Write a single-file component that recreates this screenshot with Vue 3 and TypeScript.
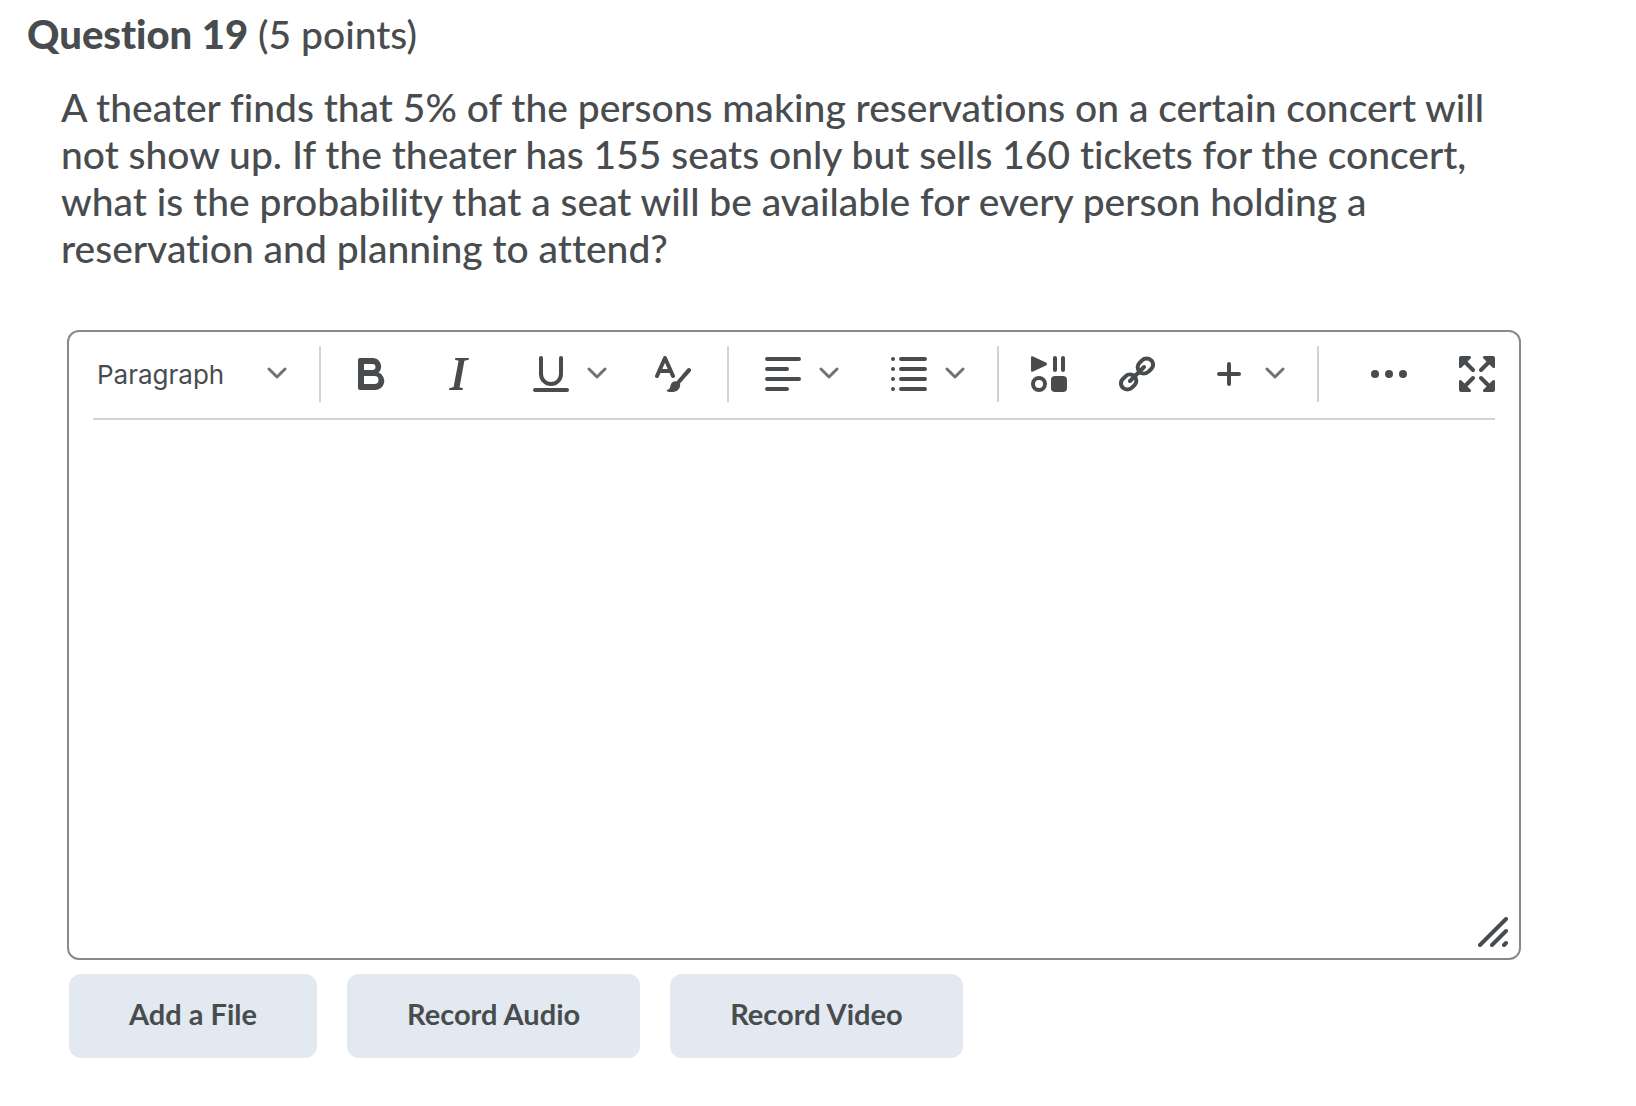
<script setup lang="ts">
import { ref } from 'vue'

const format = ref<string>('Paragraph')
const answer = ref<string>('')
const attachments: string[] = ['Add a File', 'Record Audio', 'Record Video']
</script>

<template>
  <main class="question">
    <h2 class="heading"><strong>Question 19</strong> (5 points)</h2>

    <p class="prompt">
      A theater finds that 5% of the persons making reservations on a certain concert will not show up. If the theater
      has 155 seats only but sells 160 tickets for the concert, what is the probability that a seat will be available
      for every person holding a reservation and planning to attend?
    </p>

    <section class="editor">
      <div class="toolbar" role="toolbar" aria-label="Formatting">
        <div class="format">
          <select v-model="format" aria-label="Format">
            <option>Paragraph</option>
          </select>
          <svg class="chevron" viewBox="0 0 20 14"><path d="M2 2 10 10 18 2" /></svg>
        </div>

        <div class="group">
          <button class="tool" type="button" aria-label="Bold">
            <svg class="icon" viewBox="0 0 36 36">
              <path fill-rule="evenodd" d="M7 2h13a8.500 8.500 0 0 1 5.500 14.600A9 9 0 0 1 22 34H7a2 2 0 0 1-2-2V4a2 2 0 0 1 2-2Zm4 6v6h8.500a3 3 0 0 0 0-6Zm0 12v8h10.500a4 4 0 0 0 0-8Z" />
            </svg>
          </button>
          <button class="tool" type="button" aria-label="Italic">
            <svg class="icon" viewBox="0 0 36 36">
              <path d="M14.300 2H28l-.3 1.800-4.300 1-4.900 26.400 3.400 1-.3 1.800H8l.3-1.800 4.300-1.200L17.600 4.800l-3.600-1Z" />
            </svg>
          </button>
          <button class="menu" type="button" aria-label="Underline">
            <svg class="icon line" viewBox="0 0 36 36"><path d="M8 2v16a10 10 0 0 0 20 0V2M2 34h32" /></svg>
            <svg class="chevron" viewBox="0 0 20 14"><path d="M2 2 10 10 18 2" /></svg>
          </button>
          <button class="tool" type="button" aria-label="Font style">
            <svg class="icon" viewBox="0 0 36 36">
              <path class="stroke" d="M2 20 10 2 18 20M5 15h10" />
              <path d="M32.300 12.700a2.200 2.200 0 0 1 3.300 2.900L25 27.500c1 5.500-3.500 9-9 8.500-3.500-.2-5-1-4-1.900 2-.8 3-1.700 3.300-3.700.6-4 3.500-5.500 6.200-5Z" />
            </svg>
          </button>
        </div>

        <div class="group">
          <button class="menu" type="button" aria-label="Alignment">
            <svg class="icon line" viewBox="0 0 36 36"><path d="M2 3h32M2 13h20M2 23h32M2 33h20" /></svg>
            <svg class="chevron" viewBox="0 0 20 14"><path d="M2 2 10 10 18 2" /></svg>
          </button>
          <button class="menu" type="button" aria-label="List">
            <svg class="icon line" viewBox="0 0 36 36">
              <path d="M2 3h0M2 13h0M2 23h0M2 33h0M10 3h24M10 13h24M10 23h24M10 33h24" />
            </svg>
            <svg class="chevron" viewBox="0 0 20 14"><path d="M2 2 10 10 18 2" /></svg>
          </button>
        </div>

        <div class="group">
          <button class="tool" type="button" aria-label="Insert stuff">
            <svg class="icon" viewBox="0 0 36 36">
              <path d="M0 1.500C0 .3 1 0 2 .4l13 6.200c1.400.7 1.400 2.100 0 2.800L2 15.600c-1 .4-2 .1-2-1.100Z" />
              <rect x="22" width="4" height="16" rx="2" />
              <rect x="30" width="4" height="16" rx="2" />
              <circle class="stroke" cx="8" cy="28" r="6" />
              <rect x="20" y="20" width="16" height="16" rx="4" />
            </svg>
          </button>
          <button class="tool" type="button" aria-label="Insert link">
            <svg class="icon line" viewBox="0 0 36 36">
              <path d="m20.500 6.800 2.500-2.500a6.500 6.500 0 0 1 9.200 0 6 6 0 0 1 0 8.700l-2.700 2.700a6.500 6.500 0 0 1-9 0 6.300 6.300 0 0 1 0-8.900ZM15.500 29.200l-2.500 2.500a6.500 6.500 0 0 1-9.200 0 6 6 0 0 1 0-8.700l2.700-2.700a6.500 6.500 0 0 1 9 0 6.300 6.300 0 0 1 0 8.900ZM11 25l14-14" />
            </svg>
          </button>
          <button class="menu" type="button" aria-label="Insert">
            <svg class="icon line" viewBox="0 0 36 36"><path d="M18 8v20M8 18h20" /></svg>
            <svg class="chevron" viewBox="0 0 20 14"><path d="M2 2 10 10 18 2" /></svg>
          </button>
        </div>

        <div class="group end">
          <button class="tool" type="button" aria-label="More actions">
            <svg class="icon" viewBox="0 0 36 36">
              <circle cx="4" cy="18" r="4" /><circle cx="18" cy="18" r="4" /><circle cx="32" cy="18" r="4" />
            </svg>
          </button>
          <button class="tool" type="button" aria-label="Full screen">
            <svg class="icon" viewBox="0 0 36 36">
              <path class="stroke" d="m6 6 8 8M30 6l-8 8M6 30l8-8M30 30l-8-8" />
              <path d="M2 0h8.500c1.700 0 2 1.500 1 2.500l-9 9C1.500 12.500 0 12.200 0 10.500V2a2 2 0 0 1 2-2ZM34 0h-8.500c-1.700 0-2 1.500-1 2.500l9 9c1 1 2.500.7 2.500-1V2a2 2 0 0 0-2-2ZM2 36h8.500c1.700 0 2-1.500 1-2.500l-9-9c-1-1-2.500-.7-2.500 1V34a2 2 0 0 0 2 2ZM34 36h-8.500c-1.700 0-2-1.500-1-2.500l9-9c1-1 2.500-.7 2.500 1V34a2 2 0 0 1-2 2Z" />
            </svg>
          </button>
        </div>
      </div>

      <textarea v-model="answer" class="answer" aria-label="Answer"></textarea>
      <svg class="grip" viewBox="0 0 30 30"><path d="M2 28 28 2M14 28 28 14M26 28l2-2" /></svg>
    </section>

    <div class="attachments">
      <button v-for="label in attachments" :key="label" class="attach" type="button">{{ label }}</button>
    </div>
  </main>
</template>

<style>
body {
  margin: 0;
  background: #fff;
}
</style>

<style scoped>
.question {
  box-sizing: border-box;
  padding: 10px 115px 48px 67px;
  color: #494c4e;
  font-family: Lato, sans-serif;
  font-variant-ligatures: none;
}

.heading {
  margin: 0 0 0 -40px;
  font-size: 39px;
  font-weight: 500;
  line-height: 48px;
}

.heading strong {
  font-size: 40px;
  font-weight: 900;
}

.prompt {
  margin: 26px 0 58px -6px;
  font-size: 39px;
  font-weight: 500;
  line-height: 47px;
}

.editor {
  position: relative;
  border: 2px solid #868a8e;
  border-radius: 12px;
}

.toolbar {
  display: flex;
  margin: 0 24px;
  padding: 14px 0 16px;
  border-bottom: 2px solid #cdd5dc;
}

.format {
  display: flex;
  align-items: center;
  position: relative;
  width: 194px;
  margin-right: 32px;
}

.format select {
  width: 100%;
  height: 56px;
  padding: 0 32px 0 4px;
  border: 0;
  appearance: none;
  background: transparent;
  color: inherit;
  font-family: Inter, sans-serif;
  font-size: 26px;
}

.format .chevron {
  position: absolute;
  right: 0;
  pointer-events: none;
}

.group {
  display: flex;
  align-items: center;
  gap: 48px;
  padding: 0 32px;
  border-left: 2px solid #cdd5dc;
}

.end {
  flex: 1;
  justify-content: flex-end;
  padding-right: 0;
}

.tool,
.menu {
  display: flex;
  align-items: center;
  height: 56px;
  padding: 0 4px 0 0;
  border: 0;
  background: transparent;
  color: inherit;
}

.menu {
  gap: 18px;
  padding: 0 0 0 4px;
}

.end .tool:last-child {
  padding: 0;
}

.icon {
  width: 36px;
  height: 36px;
  fill: currentColor;
}

.line,
.stroke {
  fill: none;
  stroke: currentColor;
  stroke-width: 4px;
  stroke-linecap: round;
  stroke-linejoin: round;
}

.chevron {
  width: 20px;
  height: 14px;
  fill: none;
  stroke: #6e7376;
  stroke-width: 3px;
  stroke-linecap: round;
  stroke-linejoin: round;
}

.answer {
  display: block;
  box-sizing: border-box;
  width: 100%;
  height: 538px;
  padding: 24px;
  border: 0;
  border-radius: 0 0 12px 12px;
  outline: 0;
  resize: none;
  background: transparent;
  color: inherit;
  font: inherit;
  font-size: 39px;
}

.grip {
  position: absolute;
  right: 11px;
  bottom: 11px;
  width: 30px;
  height: 30px;
  fill: none;
  stroke: #494c4e;
  stroke-width: 4px;
  stroke-linecap: round;
}

.attachments {
  display: flex;
  gap: 30px;
  margin: 14px 0 0 2px;
}

.attach {
  height: 84px;
  padding: 0 60px 6px;
  border: 0;
  border-radius: 12px;
  background: #e3e9f1;
  color: inherit;
  font-family: inherit;
  font-size: 29px;
  font-weight: 700;
}
</style>
